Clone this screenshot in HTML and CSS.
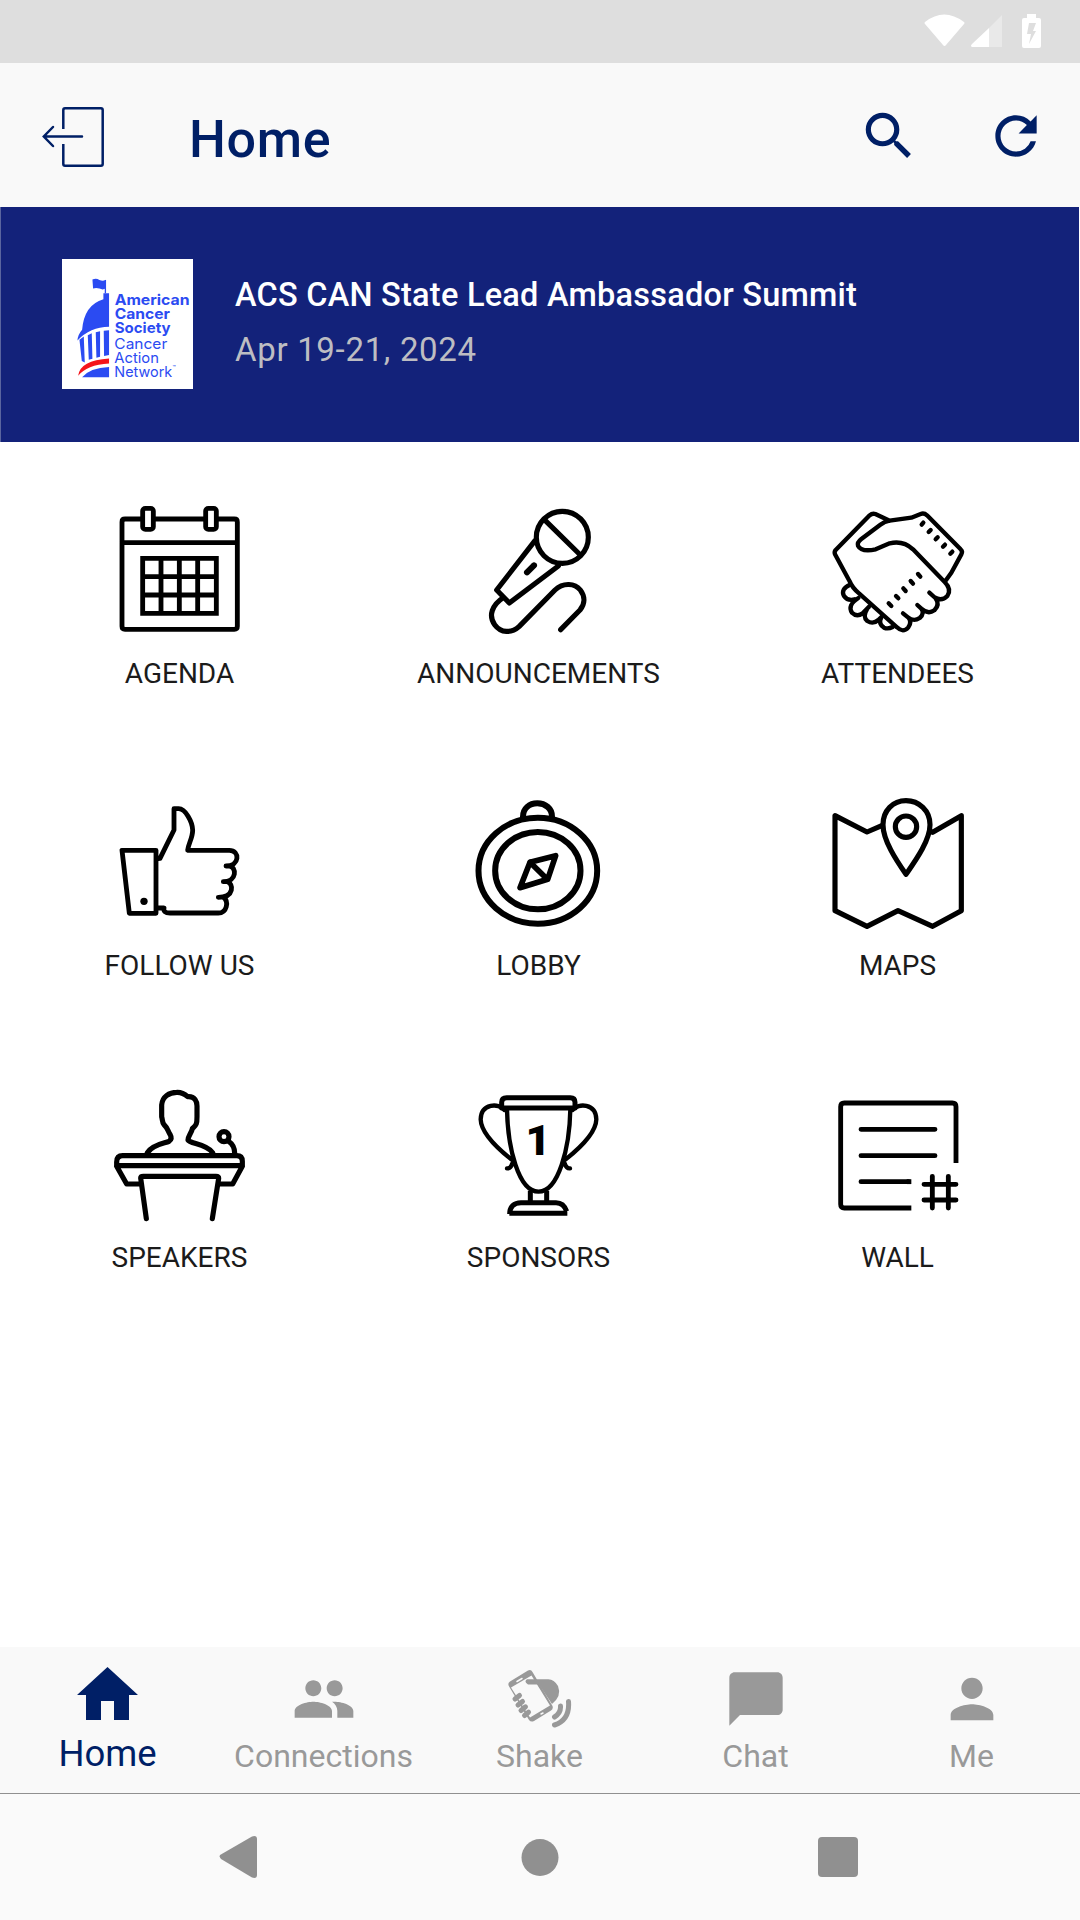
FILE: index.html
```html
<!DOCTYPE html>
<html lang="en">
<head>
  <meta charset="UTF-8" />
  <meta name="viewport" content="width=device-width, initial-scale=1.0"/>
  <title>Home</title>
  <link rel="stylesheet" href="styles.css">
</head>
<body>
  <div class="status-bar">
    <svg class="wifi" viewBox="0 0 41 32"><path d="M1 8 Q20 -7 40 8 Q41 9 40 10 L22 31 Q20.500 33 19 31 L1 10 Q0 9 1 8Z"/></svg>
    <svg class="signal" viewBox="0 0 32 32"><path opacity=".35" d="M31 0 V32 H18 V13Z"/><path d="M18 13 V32 H1 Q-1 31 1 29Z"/></svg>
    <svg class="battery" viewBox="0 0 19 34"><path fill-rule="evenodd" d="M5 0 H14 V4 H17 Q19 4 19 6 V32 Q19 34 17 34 H2 Q0 34 0 32 V6 Q0 4 2 4 H5Z M7 9 L5 20 H9 L7 30 L14 17 H11 L14 9Z"/></svg>
  </div>

  <header class="app-bar">
    <svg class="exit" viewBox="0 0 64 62" fill="none" stroke="currentColor" stroke-width="2.500" stroke-linecap="round">
      <path stroke-linecap="butt" d="M21.300 22 V3 Q21.300 1.300 23 1.300 H59 Q60.700 1.300 60.700 3 V57 Q60.700 58.700 59 58.700 H23 Q21.300 58.700 21.300 57 V37"/>
      <path d="M11 20 L1.800 29.500 L11 39 M2 29.500 H40"/>
    </svg>
    <h1>Home</h1>
    <svg class="action search" viewBox="0 0 24 24"><path d="M15.500 14h-.79l-.28-.27A6.471 6.471 0 0 0 16 9.500 6.500 6.500 0 1 0 9.500 16c1.610 0 3.090-.59 4.230-1.570l.27.28v.79l5 4.990L20.490 19l-4.990-5zm-6 0C7.010 14 5 11.990 5 9.500S7.010 5 9.500 5 14 7.010 14 9.500 11.990 14 9.500 14z"/></svg>
    <svg class="action" viewBox="0 0 24 24"><path d="M17.650 6.350A7.958 7.958 0 0 0 12 4c-4.420 0-7.990 3.580-7.990 8s3.570 8 7.990 8c3.730 0 6.840-2.550 7.730-6h-2.080A5.990 5.990 0 0 1 12 18c-3.310 0-6-2.690-6-6s2.690-6 6-6c1.660 0 3.140.69 4.220 1.780L13 11h7V4l-2.350 2.350z"/></svg>
  </header>

  <section class="event">
    <svg class="event-logo" viewBox="66 57 393 391">
      <g fill="#2b4bf2">
        <path d="M157 119 Q168 114 178 120 Q188 125 197 120 V146 Q188 151 178 146 Q168 142 159 146Z"/>
        <path d="M194 120 H198 V160 H194Z"/>
        <path d="M190 160 H207 V261 Q150 262 112 302 Q113 285 126 270 Q132 195 190 178Z"/>
        <path d="M118 300 L131 290 L134 368 L125 364Z M143 286 L155 280 L157 357 L146 360Z M167 277 L180 274 V351 L169 354Z M191 273 L207 271 V346 L192 349Z"/>
        <path d="M126 413 Q150 384 207 382 V413Z"/>
      </g>
      <path fill="#f5141b" d="M114 408 Q120 361 207 356 V371 Q140 375 114 408Z"/>
      <g class="logo-bold">
        <text x="224" y="195" textLength="225" lengthAdjust="spacingAndGlyphs">American</text>
        <text x="224" y="238" textLength="166" lengthAdjust="spacingAndGlyphs">Cancer</text>
        <text x="224" y="281" textLength="168" lengthAdjust="spacingAndGlyphs">Society</text>
      </g>
      <g class="logo-light">
        <text x="223" y="327" textLength="159" lengthAdjust="spacingAndGlyphs">Cancer</text>
        <text x="223" y="371" textLength="134" lengthAdjust="spacingAndGlyphs">Action</text>
        <text x="223" y="412" textLength="174" lengthAdjust="spacingAndGlyphs">Network</text>
        <text class="tm" x="398" y="388">™</text>
      </g>
    </svg>
    <div class="event-info">
      <h2>ACS CAN State Lead Ambassador Summit</h2>
      <p>Apr 19-21, 2024</p>
    </div>
  </section>

  <main class="tiles">
    <a class="tile">
      <svg viewBox="0 0 540 450">
        <path d="M153 87 H105 Q96 87 96 96 V409 Q96 418 105 418 H433 Q442 418 442 409 V96 Q442 87 433 87 H384 M195 87 H342 M96 158 H442"/>
        <rect x="158" y="55" width="32" height="63" rx="8"/>
        <rect x="347" y="55" width="32" height="63" rx="8"/>
        <path stroke-linejoin="miter" d="M158 205 H379 V370 H158Z M158 260 H379 M158 315 H379 M213 205 V370 M268 205 V370 M323 205 V370"/>
      </svg>
      <span>AGENDA</span>
    </a>
    <a class="tile">
      <svg class="medium" viewBox="-3 0 540 450">
        <circle cx="337" cy="142" r="78"/>
        <path d="M283 89 L388 192 M255 152 L140 300 L178 339 L325 228 M161 322 C125 345 115 378 134 404 C153 430 185 430 207 410 L315 300 C340 276 375 280 391 300 C406 320 405 342 390 360 L332 419"/>
        <path stroke-width="18" d="M231 247 L252 226"/>
      </svg>
      <span>ANNOUNCEMENTS</span>
    </a>
    <a class="tile">
      <svg class="thin" viewBox="-5 0 540 450">
        <path d="M240 92 L197 72 Q188 69 180 76 L78 180 Q73 186 76 193 L119 272 Q128 294 148 310 L262 412 Q280 430 296 412 Q308 395 295 382 L280 370 M295 382 Q312 396 330 384 Q346 370 335 356 L323 345 M335 356 Q355 374 374 361 Q392 344 377 324 L359 308 M375 322 Q396 335 413 318 Q427 298 405 276 L310 178 Q280 150 240 160 L198 178 Q155 187 145 167 Q142 157 155 147 L212 104 Q225 94 240 92 L305 83 L333 72 Q343 68 352 76 L453 178 Q460 184 455 193 L425 248 L405 276"/>
        <path d="M121 284 Q92 297 103 318 Q114 334 135 328 M146 324 Q112 346 127 368 Q141 382 159 370 L178 350 M172 358 Q158 380 173 393 Q190 404 206 390 L216 380 M215 382 Q205 402 223 413 Q235 418 249 411"/>
        <path stroke-width="13" d="M336 104 L341 98 M357 126 L363 120 M378 148 L384 142 M400 170 L406 164 M422 191 L428 185 M325 252 L332 260 M303 273 L310 281 M281 295 L288 303 M259 318 L266 325 M237 340 L245 348"/>
      </svg>
      <span>ATTENDEES</span>
    </a>

    <a class="tile">
      <svg viewBox="0 6 540 450">
        <path d="M96 211 H198 V400 H118Z M204 236 L210 235 L252 150 V86 H266 C286 86 307 125 308 150 C308 175 295 190 293 211 H418 C450 211 450 258 408 258 M418 258 C440 260 442 305 400 305 M412 305 C430 310 435 352 385 352 M400 352 C418 365 410 399 385 399 H240 C225 399 220 394 222 384 H204"/>
        <circle class="dot" cx="162" cy="364" r="11"/>
      </svg>
      <span>FOLLOW US</span>
    </a>
    <a class="tile">
      <svg viewBox="-3 0 540 450">
        <g stroke-width="18">
          <ellipse cx="263.500" cy="266" rx="178" ry="159"/>
          <ellipse cx="263.500" cy="266" rx="128" ry="116"/>
          <path d="M219 104 C219 79 238 64 262 64 S306 79 306 104"/>
        </g>
        <path stroke-width="17" d="M240 241 L317 221 L293 292 L210 317Z M240 241 L288 288"/>
      </svg>
      <span>LOBBY</span>
    </a>
    <a class="tile">
      <svg class="medium" viewBox="-5 0 540 450">
        <path d="M218 130 L172 150 L76 101 V386 L172 433 L265 386 L369 433 L455 386 V101 L369 151 L361 149"/>
        <path d="M289 277 C260 235 220 175 220 128 C220 86 250 56 289 56 S361 86 361 128 C361 175 318 235 289 277Z"/>
        <circle cx="289" cy="134" r="32"/>
      </svg>
      <span>MAPS</span>
    </a>

    <a class="tile">
      <svg class="medium" viewBox="0 12 540 450">
        <path d="M172 248 C190 222 225 220 237 214 Q248 207 240 193 C232 180 234 176 222 164 C216 155 218 150 215 140 V105 C217 80 238 67 260 67 C276 66 284 72 293 80 C315 78 321 95 321 108 V140 C321 165 318 165 307 176 C304 190 294 199 294 210 C300 222 348 220 368 248"/>
        <path d="M80 287 V276 Q80 257 98 257 H440 Q457 257 457 274 V287Z M80 289 L110 342 H148 M457 289 L428 342 H390 M169 446 L152 324 Q152 319 160 319 H378 Q386 319 386 325 L367 446"/>
        <circle cx="402" cy="200" r="15"/>
        <path d="M416 214 Q434 226 434 250"/>
      </svg>
      <span>SPEAKERS</span>
    </a>
    <a class="tile">
      <svg class="thin" viewBox="-3 0 540 450">
        <path stroke-width="15" d="M155 102 V85 Q155 71 170 71 H361 Q375 71 375 85 V102Z"/>
        <path d="M171 106 C173 220 205 353 265.500 353 S359 220 361 106 M163 108 C147 86 93 88 92 136 C93 180 150 229 184 256 M368 108 C384 86 438 88 439 136 C438 180 381 229 347 256 M187 268 Q182 284 171 283 M344 268 Q349 284 360 283"/>
        <path stroke-linecap="butt" stroke-width="15" d="M241 350 V382 M290 350 V382 M178 418 H352 M179 420 C179 398 192 386 213 386 H318 C338 386 346 400 350 412"/>
        <text x="264" y="243">1</text>
      </svg>
      <span>SPONSORS</span>
    </a>
    <a class="tile">
      <svg viewBox="-6 0 540 450">
        <path stroke-linecap="butt" d="M438 267 V98 Q438 87 427 87 H103 Q92 87 92 98 V391 Q92 402 103 402 H304"/>
        <path d="M153 166 H375 M153 245 H375 M153 323 H296 M342 331 H438 M342 378 H438 M367 307 V402 M415 307 V402"/>
        <path stroke-linecap="butt" d="M290 323 H304"/>
      </svg>
      <span>WALL</span>
    </a>
  </main>

  <nav class="tabs">
    <a class="tab active">
      <svg viewBox="0 0 64 64"><path d="M31.500 0 L62 28 H53 V53 H38 V34 H25 V53 H10 V28 H1Z"/></svg>
      <span>Home</span>
    </a>
    <a class="tab">
      <svg viewBox="0 0 24 24"><path d="M16 11c1.660 0 2.990-1.340 2.990-3S17.660 5 16 5s-3 1.340-3 3 1.340 3 3 3zm-8 0c1.660 0 2.990-1.340 2.990-3S9.660 5 8 5 5 6.340 5 8s1.340 3 3 3zm0 2c-2.330 0-7 1.170-7 3.500V19h14v-2.500c0-2.330-4.670-3.500-7-3.500zm8 0c-.29 0-.62.02-.97.05 1.160.84 1.970 1.970 1.970 3.450V19h6v-2.500c0-2.330-4.670-3.500-7-3.500z"/></svg>
      <span>Connections</span>
    </a>
    <a class="tab">
      <svg viewBox="0 0 64 64">
        <path fill-rule="evenodd" d="M2 14.500 L20 3.500 Q23 2 24.500 5 L44.500 39 Q45.500 42 43 43.500 L26 54 Q23 55.500 21 53 L0.800 19 Q-0.500 16 2 14.500Z M3 20.500 L23.500 8.500 L42 38.500 L22 50.500Z"/>
        <path d="M19 12.200 H40 Q46 12 50 19 Q54 29 44 37 L31 17.500 H20 Q15.500 14.500 19 12.200Z"/>
        <path class="grip" d="M7 32 L11.500 28.500 M10 38 L14.500 34.500 M13 43.500 L17.500 39.800 M16.500 48.500 L20.500 45.200"/>
        <path class="wave" d="M52.500 39 Q53 46 46.500 50 M60.500 34.500 Q62 53 46.500 58"/>
        <path class="cut" d="M9 14.500 L14 11.500 M33 47 L35 46"/>
      </svg>
      <span>Shake</span>
    </a>
    <a class="tab">
      <svg viewBox="0 0 24 24"><path d="M20 2H4c-1.100 0-2 .9-2 2v18l4-4h14c1.100 0 2-.9 2-2V4c0-1.100-.9-2-2-2z"/></svg>
      <span>Chat</span>
    </a>
    <a class="tab">
      <svg viewBox="0 0 24 24"><path d="M12 12c2.210 0 4-1.790 4-4s-1.790-4-4-4-4 1.790-4 4 1.790 4 4 4zm0 2c-2.670 0-8 1.340-8 4v2h16v-2c0-2.660-5.330-4-8-4z"/></svg>
      <span>Me</span>
    </a>
  </nav>

  <div class="system-nav">
    <svg viewBox="0 0 42 42"><path d="M2 19 L34 0.500 Q39 -1 39 3 V39 Q39 43 34 41.500 L3 23 Q1 21 2 19Z"/></svg>
    <svg viewBox="0 0 42 42"><circle cx="22" cy="21.500" r="18.500"/></svg>
    <svg viewBox="0 0 42 42"><rect x="1" y="1" width="40" height="40" rx="4"/></svg>
  </div>
</body>
</html>
```
FILE: styles.css
```css
:root {
  --navy: #001f66;
  --banner: #13227a;
  --bar-bg: #f9f9f9;
  --muted: #999;
}

* {
  box-sizing: border-box;
}

body {
  margin: 0;
  height: 1920px;
  display: flex;
  flex-direction: column;
  background: #fff;
  font-family: Roboto, sans-serif;
  overflow: hidden;
}

svg {
  display: block;
  flex: none;
  fill: currentColor;
}

h1, h2, p {
  margin: 0;
}

.status-bar {
  height: 63px;
  padding: 14px 39px 0 0;
  display: flex;
  justify-content: flex-end;
  background: #dedede;
  color: #fff;
}

.wifi { width: 41px; height: 32px; margin-right: 6px; }
.signal { width: 32px; height: 32px; margin: 1px 19px 0 0; }
.battery { width: 19px; height: 34px; }

.app-bar {
  height: 144px;
  padding: 0 33px 0 42px;
  display: flex;
  align-items: center;
  background: var(--bar-bg);
  color: var(--navy);
}

.exit {
  width: 64px;
  height: 62px;
  fill: none;
  margin-top: 6px;
}

.app-bar h1 {
  flex: 1;
  margin: 9px 0 0 83px;
  font-size: 52px;
  font-weight: 500;
  letter-spacing: 0.7px;
}

.action {
  width: 62px;
  height: 62px;
  margin-top: 1px;
}

.search {
  margin-right: 65px;
}

.event {
  height: 235px;
  margin-right: 1px;
  padding: 52px 0 0 61px;
  display: flex;
  background: var(--banner);
  border-left: 1px solid #5a659f;
}

.event-logo {
  width: 131px;
  height: 130px;
  background: #fff;
}

.logo-bold, .logo-light {
  font-family: Inter, sans-serif;
  font-size: 44px;
  font-weight: 700;
  fill: #2b4bf2;
}

.logo-light {
  font-weight: 400;
}

.logo-light .tm {
  font-size: 16px;
}

.event-info {
  margin: 17px 0 0 42px;
}

.event h2 {
  font-size: 32.5px;
  font-weight: 500;
  line-height: 38px;
  letter-spacing: 0.24px;
  color: #fff;
}

.event p {
  margin-top: 17px;
  font-size: 33px;
  line-height: 38px;
  letter-spacing: 0.68px;
  color: #bdbdc2;
}

.tiles {
  flex: 1;
  width: 1077px;
  padding-top: 48px;
  display: grid;
  grid-template-columns: repeat(3, 1fr);
  grid-auto-rows: 292px;
}

.tile {
  display: flex;
  flex-direction: column;
  align-items: center;
  color: #1b1b1b;
  font-size: 28px;
}

.tile svg {
  width: 180px;
  height: 150px;
  fill: none;
  stroke: #000;
  stroke-width: 14.5;
  stroke-linecap: round;
  stroke-linejoin: round;
}

.tile .thin { stroke-width: 13; }
.tile .medium { stroke-width: 15.5; }

.tile .dot {
  fill: #000;
  stroke: none;
}

.tile text {
  font: 900 130px Roboto, sans-serif;
  text-anchor: middle;
  fill: #000;
  stroke: none;
}

.tile span {
  margin-top: 18px;
  line-height: 32px;
}

.tabs {
  height: 147px;
  padding-top: 20px;
  display: grid;
  grid-template-columns: repeat(5, 1fr);
  background: var(--bar-bg);
  border-bottom: 1px solid #909090;
}

.tab {
  display: flex;
  flex-direction: column;
  align-items: center;
  color: var(--muted);
  font-size: 32px;
}

.tab svg {
  width: 64px;
  height: 64px;
}

.tab span {
  margin: 6px 1px 0 0;
  line-height: 38px;
}

.tab.active {
  color: var(--navy);
  font-size: 36.5px;
}

.tab.active span {
  margin-top: 4px;
}

.grip, .wave, .cut {
  fill: none;
  stroke: currentColor;
  stroke-width: 5;
  stroke-linecap: round;
}

.cut {
  stroke: var(--bar-bg);
  stroke-width: 1.5;
}

.system-nav {
  height: 126px;
  padding: 0 221px 0 218px;
  display: flex;
  align-items: center;
  justify-content: space-between;
  background: #fafafa;
  color: #909090;
}

.system-nav svg {
  width: 42px;
  height: 42px;
}
```
